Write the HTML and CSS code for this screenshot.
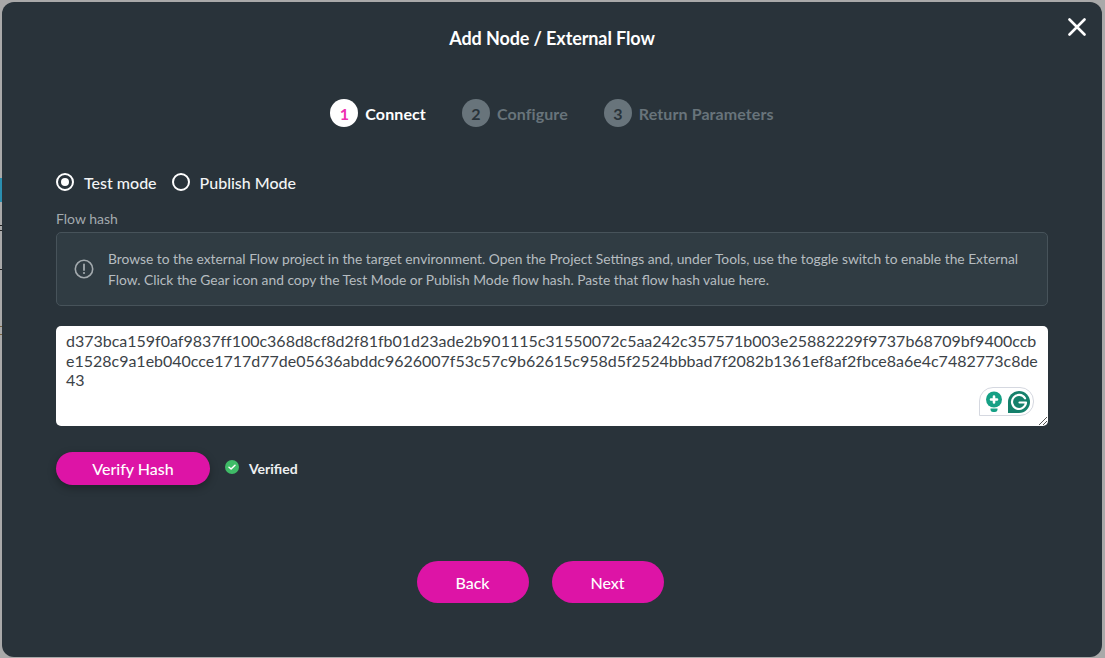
FILE: index.html
```html
<!DOCTYPE html>
<html lang="en">
<head>
<meta charset="utf-8">
<title>Add Node / External Flow</title>
<link rel="stylesheet" href="styles.css">
</head>
<body>
<div class="backdrop-mark mark-teal"></div>
<div class="backdrop-mark mark-a"></div>
<div class="backdrop-mark mark-b"></div>
<div class="backdrop-mark mark-c"></div>
<main class="modal">
  <h1 class="title">Add Node / External Flow</h1>
  <button class="close" aria-label="Close">
    <svg width="18" height="18" viewBox="0 0 18 18"><path d="M1.5 1.5 16.500 16.500M16.500 1.500 1.500 16.500" stroke="#fff" stroke-width="2.6" stroke-linecap="round"/></svg>
  </button>
  <ol class="steps">
    <li class="step active"><span class="num">1</span>Connect</li>
    <li class="step"><span class="num">2</span>Configure</li>
    <li class="step"><span class="num">3</span>Return Parameters</li>
  </ol>
  <div class="modes">
    <label class="mode"><span class="radio on"></span>Test mode</label>
    <label class="mode"><span class="radio"></span>Publish Mode</label>
  </div>
  <div class="field-label">Flow hash</div>
  <div class="info">
    <svg class="info-icon" width="20" height="20" viewBox="0 0 20 20"><circle cx="10" cy="10" r="8.700" fill="none" stroke="#a3aaae" stroke-width="1.600"/><path d="M10 5.500v5.500" stroke="#a3aaae" stroke-width="1.800" stroke-linecap="round"/><circle cx="10" cy="14" r="1.100" fill="#a3aaae"/></svg>
    <p>Browse to the external Flow project in the target environment. Open the Project Settings and, under Tools, use the toggle switch to enable the External Flow. Click the Gear icon and copy the Test Mode or Publish Mode flow hash. Paste that flow hash value here.</p>
  </div>
  <div class="hash-box">
    <div class="hash">d373bca159f0af9837ff100c368d8cf8d2f81fb01d23ade2b901115c31550072c5aa242c357571b003e25882229f9737b68709bf9400ccb<br>e1528c9a1eb040cce1717d77de05636abddc9626007f53c57c9b62615c958d5f2524bbbad7f2082b1361ef8af2fbce8a6e4c7482773c8de<br>43</div>
    <div class="grammarly">
      <svg width="22" height="24" viewBox="0 0 22 24"><circle cx="11" cy="9.500" r="8" fill="#15a085"/><path d="M11 6.500v6M8 9.500h6" stroke="#fff" stroke-width="2.600" stroke-linecap="round"/><path d="M7.500 18.500h7v1.500a2.500 2.500 0 0 1-2.500 2h-2a2.500 2.500 0 0 1-2.500-2z" fill="#15a085"/></svg>
      <svg width="24" height="24" viewBox="0 0 24 24"><path d="M12 1a11 11 0 0 1 0 22H1V12A11 11 0 0 1 12 1z" fill="#15806b"/><path d="M18 8.300A7 7 0 1 0 19 12.500h-6.500" fill="none" stroke="#fff" stroke-width="2.200" stroke-linecap="round" stroke-linejoin="round"/></svg>
    </div>
    <svg class="resize" width="10" height="10" viewBox="0 0 10 10"><path d="M9 1 1 9M9 5 5 9" stroke="#555" stroke-width="1"/></svg>
  </div>
  <div class="verify-row">
    <button class="btn verify">Verify Hash</button>
    <span class="verified">
      <svg width="14" height="14" viewBox="0 0 14 14"><circle cx="7" cy="7" r="7" fill="#3fbb67"/><path d="M4 7.200 6.100 9 10 5.200" fill="none" stroke="#fff" stroke-width="1.500" stroke-linecap="round" stroke-linejoin="round"/></svg>
      Verified
    </span>
  </div>
  <div class="actions">
    <button class="btn nav">Back</button>
    <button class="btn nav">Next</button>
  </div>
</main>
</body>
</html>
```
FILE: styles.css
```css
* { box-sizing: border-box; }
html, body { height: 100%; }
body {
  margin: 0;
  padding: 2px 3px 1px 2px;
  background: #a9a9a9;
  font-family: Lato, "Noto Sans", sans-serif;
  overflow: hidden;
  position: relative;
}
.backdrop-mark { position: absolute; left: 0; width: 2px; }
.mark-teal { top: 178px; height: 24px; background: #2a8fb0; }
.mark-a { top: 225px; height: 6px; border-top: 1px solid #222; border-bottom: 1px solid #222; }
.mark-b { top: 269px; height: 1px; background: #222; }
.mark-c { top: 326px; height: 9px; border-top: 1px solid #77623f; border-bottom: 1px solid #77623f; }
.modal {
  position: relative;
  height: 655px;
  background: #29333a;
  border-radius: 12px;
  padding: 25px 54px 0;
  color: #fff;
}
.title {
  margin: 0;
  text-align: center;
  font-size: 18px;
  line-height: 22px;
  font-weight: 700;
  letter-spacing: -.1px;
}
.close {
  position: absolute;
  top: 16px;
  right: 16px;
  width: 18px;
  height: 18px;
  padding: 0;
  border: 0;
  background: none;
  display: flex;
}
.steps {
  list-style: none;
  margin: 50px 0 0;
  padding: 0;
  display: flex;
  justify-content: center;
  gap: 36px;
  height: 28px;
}
.step {
  display: flex;
  align-items: center;
  gap: 7px;
  font-size: 16px;
  font-weight: 700;
  letter-spacing: .1px;
  color: #68747b;
}
.num {
  width: 28px;
  height: 28px;
  border-radius: 50%;
  background: #68747b;
  color: #29333a;
  display: flex;
  align-items: center;
  justify-content: center;
}
.active { color: #fff; }
.active .num { background: #fff; color: #ee2eb0; }
.modes {
  display: flex;
  gap: 15px;
  margin-top: 45px;
  height: 20px;
}
.mode {
  display: flex;
  align-items: center;
  gap: 10px;
  font-size: 16px;
  font-weight: 500;
  color: #f2f4f5;
}
.radio {
  width: 18px;
  height: 18px;
  border: 2px solid #fff;
  border-radius: 50%;
  display: flex;
  align-items: center;
  justify-content: center;
}
.radio.on::after {
  content: "";
  width: 8px;
  height: 8px;
  border-radius: 50%;
  background: #fff;
}
.field-label {
  margin-top: 18px;
  font-size: 14px;
  line-height: 17px;
  color: #a3aaae;
}
.info {
  margin-top: 5px;
  height: 74px;
  border: 1px solid #47535a;
  border-radius: 5px;
  background: #303c43;
  padding: 0 14px 0 17px;
  display: flex;
  align-items: center;
  gap: 14px;
}
.info-icon { flex: none; }
.info p {
  margin: 0;
  font-size: 13.8px;
  line-height: 21px;
  color: #b6bcc0;
}
.hash-box {
  position: relative;
  margin-top: 20px;
  height: 100px;
  background: #fff;
  border-radius: 5px;
  padding: 5px 10px;
}
.hash {
  font-size: 16px;
  line-height: 19.5px;
  letter-spacing: -.01px;
  color: #3b4247;
  white-space: nowrap;
}
.grammarly {
  position: absolute;
  right: 14px;
  bottom: 10px;
  width: 55px;
  height: 29px;
  border: 1px solid #d5d8e0;
  border-radius: 14px 14px 14px 0;
  display: flex;
  align-items: center;
  justify-content: center;
  gap: 2px;
  background: #fff;
}
.resize { position: absolute; right: 0; bottom: 0; }
.verify-row {
  display: flex;
  align-items: center;
  gap: 15px;
  margin-top: 26px;
  height: 33px;
}
.btn {
  border: 0;
  background: #dd14a6;
  color: #fff;
  font-family: inherit;
  font-size: 16px;
  font-weight: 500;
  border-radius: 21px;
  padding: 0;
}
.verify {
  width: 154px;
  height: 33px;
  box-shadow: 0 3px 8px rgba(0, 0, 0, .3);
}
.verified {
  display: flex;
  align-items: center;
  gap: 10px;
  font-size: 14px;
  font-weight: 700;
  color: #eef0f1;
}
.verified svg { margin-top: -3px; }
.actions {
  display: flex;
  justify-content: center;
  gap: 23px;
  margin-top: 76px;
  padding-right: 24px;
}
.nav {
  width: 112px;
  height: 42px;
}
```
